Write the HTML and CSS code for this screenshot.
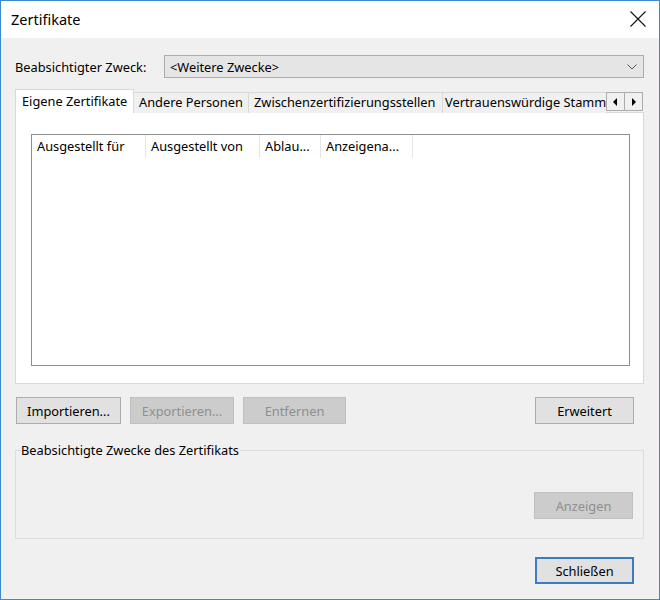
FILE: index.html
```html
<!DOCTYPE html>
<html lang="de">
<head>
    <meta charset="UTF-8">
    <title>Zertifikate</title>
    <link rel="stylesheet" href="styles.css">
</head>
<body>
    <div class="window">
        <div class="titlebar">
            <span class="title">Zertifikate</span>
            <svg class="close" width="16" height="16" viewBox="0 0 16 16">
                <path d="M0.5 0.5 L15.5 15.5 M15.5 0.5 L0.5 15.5" stroke="#111" stroke-width="1.1" fill="none"/>
            </svg>
        </div>

        <div class="content">
            <div class="purpose-row">
                <span class="purpose-label">Beabsichtigter Zweck:</span>
                <div class="combo">
                    <span>&lt;Weitere Zwecke&gt;</span>
                    <svg class="chevron" width="10" height="6" viewBox="0 0 10 6">
                        <path d="M0.5 0.5 L5 5 L9.5 0.5" stroke="#555" stroke-width="1" fill="none"/>
                    </svg>
                </div>
            </div>

            <div class="tabs">
                <div class="tab-strip">
                    <div class="tab selected">Eigene Zertifikate</div>
                    <div class="tab tab-other">Andere Personen</div>
                    <div class="tab tab-inter">Zwischenzertifizierungsstellen</div>
                    <div class="tab tab-root">Vertrauenswürdige Stammzertifizierungsstellen</div>
                </div>
                <div class="tab-scroll">
                    <span class="scroll-btn">
                        <svg width="5" height="8" viewBox="0 0 5 8"><path d="M4 0 L0 4 L4 8 Z" fill="#000"/></svg>
                    </span>
                    <span class="scroll-btn">
                        <svg width="5" height="8" viewBox="0 0 5 8"><path d="M1 0 L5 4 L1 8 Z" fill="#000"/></svg>
                    </span>
                </div>
            </div>

            <div class="tab-panel">
                <div class="list">
                    <div class="list-header">
                        <div class="col col-for">Ausgestellt für</div>
                        <div class="col col-by">Ausgestellt von</div>
                        <div class="col col-exp">Ablau...</div>
                        <div class="col col-name">Anzeigena...</div>
                    </div>
                </div>
            </div>

            <div class="button-row">
                <button class="btn btn-import">Importieren...</button>
                <button class="btn btn-export" disabled>Exportieren...</button>
                <button class="btn btn-remove" disabled>Entfernen</button>
                <button class="btn btn-advanced">Erweitert</button>
            </div>

            <fieldset class="group">
                <legend>Beabsichtigte Zwecke des Zertifikats</legend>
                <div class="group-actions">
                    <button class="btn" disabled>Anzeigen</button>
                </div>
            </fieldset>

            <div class="footer">
                <button class="btn btn-default">Schließen</button>
            </div>
        </div>
    </div>
</body>
</html>
```

FILE: styles.css
```css
body {
    margin: 0;
    padding: 0;
    font-family: 'Noto Sans', 'Open Sans', sans-serif;
    font-size: 12.8px;
    color: #000;
    background-color: #f0f0f0;
}

.window {
    width: 660px;
    height: 600px;
    box-sizing: border-box;
    border: 1px solid #3e8ad0;
    background-color: #f0f0f0;
    display: flex;
    flex-direction: column;
}

.titlebar {
    height: 37px;
    background-color: #fff;
    display: flex;
    align-items: center;
    justify-content: space-between;
    padding: 0 13px 0 10px;
}

.title {
    font-size: 14.5px;
    margin-top: -1px;
}

.close {
    margin-top: -2px;
}

.content {
    padding: 0 15px 0 14px;
}

.purpose-row {
    display: flex;
    align-items: center;
    margin-top: 17px;
}

.purpose-label {
    width: 149px;
    flex-shrink: 0;
}

.combo {
    flex: 1;
    height: 23px;
    box-sizing: border-box;
    border: 1px solid #acacac;
    background-color: #e5e5e5;
    display: flex;
    align-items: center;
    justify-content: space-between;
    padding: 0 6px 0 5px;
}

.tabs {
    display: flex;
    height: 24px;
    margin-top: 11px;
}

.tab-strip {
    display: flex;
    align-items: flex-start;
    width: 591px;
    overflow: hidden;
}

.tab {
    flex-shrink: 0;
    box-sizing: border-box;
    height: 21px;
    margin-top: 3px;
    padding-left: 5px;
    line-height: 19px;
    white-space: nowrap;
    border: 1px solid #d9d9d9;
    border-left: none;
    border-bottom: none;
    background-color: #f0f0f0;
}

.tab.selected {
    position: relative;
    z-index: 1;
    width: 119px;
    height: 24px;
    margin-top: 0;
    padding-left: 6px;
    line-height: 22px;
    border-left: 1px solid #d9d9d9;
    background-color: #fff;
}

.tab-other {
    width: 115px;
}

.tab-inter {
    width: 194px;
}

.tab-root {
    padding-left: 2px;
}

.tab-scroll {
    display: flex;
    margin-top: 3px;
    height: 19px;
}

.scroll-btn {
    width: 19px;
    height: 19px;
    box-sizing: border-box;
    border: 1px solid #adadad;
    background-color: #f0f0f0;
    display: flex;
    align-items: center;
    justify-content: center;
}

.scroll-btn + .scroll-btn {
    border-left: none;
    width: 18px;
}

.tab-panel {
    margin-top: -1px;
    height: 272px;
    box-sizing: border-box;
    border: 1px solid #d9d9d9;
    background-color: #fff;
    padding: 21px 13px 17px 15px;
}

.list {
    height: 100%;
    box-sizing: border-box;
    border: 1px solid #8e8e8e;
    background-color: #fff;
}

.list-header {
    display: flex;
    height: 23px;
}

.col {
    box-sizing: border-box;
    padding-left: 5px;
    line-height: 23px;
    border-right: 1px solid #e5e5e5;
    white-space: nowrap;
    overflow: hidden;
}

.col-for {
    width: 114px;
}

.col-by {
    width: 114px;
}

.col-exp {
    width: 61px;
}

.col-name {
    width: 92px;
}

.button-row {
    display: flex;
    gap: 9px;
    margin-top: 13px;
    padding: 0 10px 0 1px;
}

.btn {
    height: 27px;
    box-sizing: border-box;
    border: 1px solid #adadad;
    background-color: #e1e1e1;
    font-family: inherit;
    font-size: 12.8px;
    color: #000;
    padding: 0;
}

.btn:disabled {
    background-color: #cccccc;
    border-color: #bfbfbf;
    color: #8f8f8f;
}

.btn-import {
    width: 105px;
}

.btn-export {
    width: 104px;
}

.btn-remove {
    width: 103px;
}

.btn-advanced {
    width: 99px;
    margin-left: auto;
}

.group {
    margin: 18px 0 0 0;
    padding: 0 10px 18px 0;
    height: 97px;
    box-sizing: border-box;
    border: 1px solid #dcdcdc;
}

.group legend {
    padding: 0;
    margin-left: 5px;
    line-height: 16px;
}

.group-actions {
    display: flex;
    justify-content: flex-end;
    margin-top: 34px;
}

.group-actions .btn {
    width: 99px;
}

.footer {
    display: flex;
    justify-content: flex-end;
    margin-top: 18px;
    padding-right: 10px;
}

.btn-default {
    width: 99px;
    border: 2px solid #3a7dc0;
}
```
